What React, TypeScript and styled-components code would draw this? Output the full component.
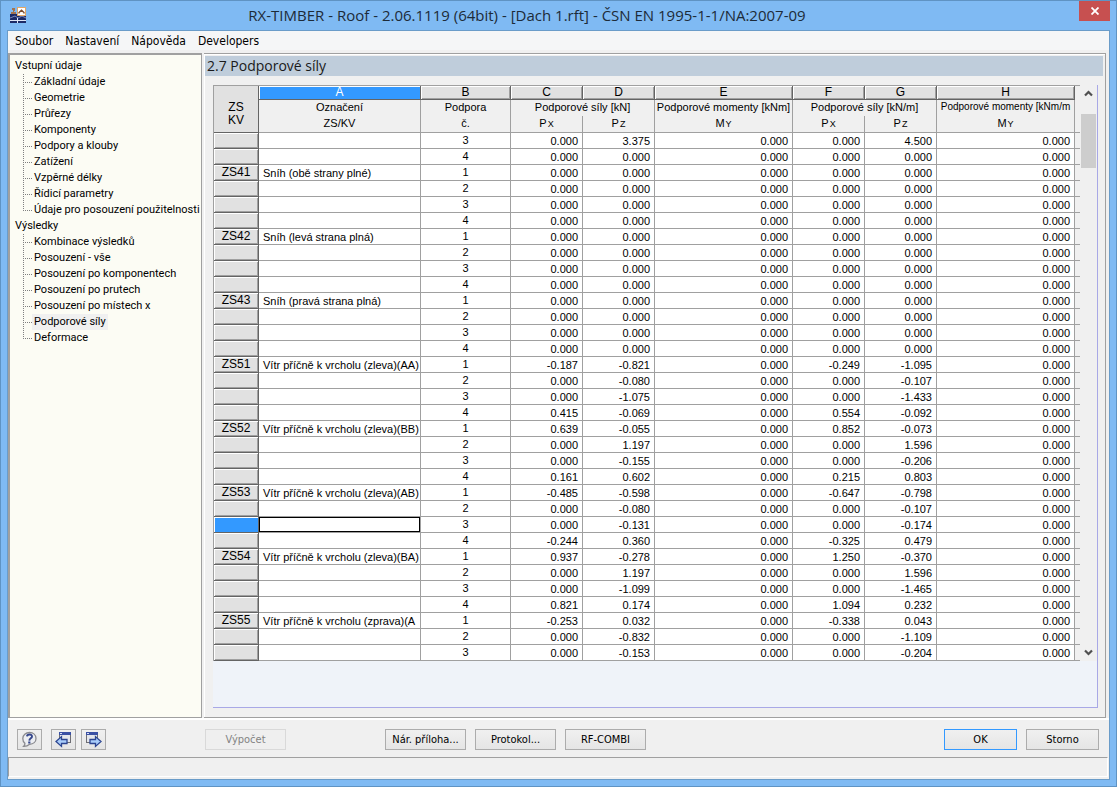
import React from "react";
import styled, { createGlobalStyle, css } from "styled-components";

const UI_FONT = '"DejaVu Sans Condensed", "Noto Sans", sans-serif';
const TITLE_FONT = '"Open Sans", "Noto Sans", sans-serif';
const COMPACT_FONT = 'Roboto, "Noto Sans", sans-serif';
const GRID_FONT = '"Liberation Sans", Arial, sans-serif';

const GlobalStyle = createGlobalStyle`
  *, *::before, *::after { box-sizing: border-box; }
  body { margin: 0; background: #7fbaf3; color: #000; font: 11px/16px ${UI_FONT}; }
  button { font: inherit; color: inherit; margin: 0; }
`;

const Window = styled.div`
  min-height: 100vh;
  display: flex;
  flex-direction: column;
  padding: 0 6px 6px;
  border: 1px solid #5f93c3;
  background: #7fbaf3;
`;

const TitleBar = styled.header`
  display: flex;
  align-items: flex-start;
  height: 29px;
  padding-left: 2px;
`;

const AppIcon = styled.svg`
  display: block;
  width: 17px;
  height: 16px;
  margin-top: 6px;
`;

const WindowTitle = styled.h1`
  flex: 1;
  margin: 0 51px 0 0;
  font: 400 15px/28px ${TITLE_FONT};
  color: #1d2b38;
  text-align: center;
  white-space: nowrap;
`;

const CloseButton = styled.button`
  display: flex;
  align-items: center;
  justify-content: center;
  width: 31px;
  height: 20px;
  padding: 0;
  border: 0;
  background: #c75050;
`;

const Client = styled.div`
  flex: 1;
  display: flex;
  flex-direction: column;
  border: 1px solid #6a9cc9;
  background: #f0f0f0;
`;

const MenuBar = styled.nav`
  display: flex;
  gap: 12px;
  height: 19px;
  padding: 0 7px;
  font-size: 12px;
  background: #f5f6f7;
`;

const MenuItem = styled.button`
  padding: 0;
  border: 0;
  background: none;
  line-height: 20px;
`;

const Workspace = styled.div`
  flex: 1;
  display: flex;
  gap: 2px;
  padding: 3px 3px 0 0;
  border-bottom: 2px solid #fff;
`;

const TreePanel = styled.nav`
  flex: none;
  width: 194px;
  padding: 3px 0 0 5px;
  border: 1px solid #a0a0a0;
  border-left-width: 2px;
  border-top-width: 2px;
  background: #fcfcf4;
  font-family: ${COMPACT_FONT};
`;

const TreeRoot = styled.ul`
  margin: 0;
  padding: 0;
  list-style: none;
`;

const TreeBranch = styled.ul`
  margin: 0;
  padding: 0 0 0 8px;
  list-style: none;
`;

const TreeLeaf = styled.li`
  display: flex;
  height: 16px;
  white-space: nowrap;
`;

const Twig = styled.span<{ $last: boolean }>`
  flex: none;
  width: 9px;
  height: 16px;
  background-image: repeating-linear-gradient(to bottom, #808080 0 1px, transparent 1px 2px),
    repeating-linear-gradient(to right, #808080 0 1px, transparent 1px 2px);
  background-repeat: no-repeat;
  background-position: 0 0, 0 8px;
  background-size: 1px ${(p) => (p.$last ? "8px" : "16px")}, 9px 1px;
`;

const TreeLink = styled.a<{ $selected?: boolean }>`
  padding: 0 2px;
  color: #000;
  text-decoration: none;
  background: ${(p) => (p.$selected ? "#f0f0f0" : "transparent")};
`;

const TreeGroupLink = styled.a`
  color: #000;
  text-decoration: none;
`;

const MainPanel = styled.main`
  flex: 1;
  min-width: 0;
  display: flex;
  flex-direction: column;
  padding: 2px 2px 9px 0;
  border: solid #a0a0a0;
  border-width: 1px 1px 1px 0;
  box-shadow: inset 1px 1px #fff;
`;

const PanelTitle = styled.h2`
  margin: 0 0 9px 1px;
  padding: 0 2px;
  font: 400 14px/20px ${TITLE_FONT};
  color: #1a1a1a;
  background: #bfcddb;
`;

const GridFrame = styled.div`
  flex: 1;
  margin: 0 5px 0 9px;
  border: solid #a8a8e6;
  border-width: 0 1px 1px 0;
  background: #eff3f9;
`;

const GridView = styled.div`
  display: grid;
  grid-template-columns: minmax(0, 1fr) 17px;
`;

const Table = styled.table`
  width: 100%;
  table-layout: fixed;
  border-collapse: separate;
  border-spacing: 0;
  border: solid #a0a0a0;
  border-width: 1px 0 0 1px;
  background: #fff;
  font: 11px/15px ${GRID_FONT};
`;

const Col = styled.col<{ $width?: number }>`
  width: ${(p) => (p.$width ? `${p.$width}px` : "auto")};
`;

const HeadCell = styled.th<{ $join?: boolean; $open?: boolean; $dense?: boolean }>`
  height: 16px;
  padding: 0;
  overflow: hidden;
  font-size: ${(p) => (p.$dense ? "10px" : "11px")};
  font-weight: 400;
  line-height: 14px;
  text-align: center;
  vertical-align: top;
  white-space: nowrap;
  background: #f0f0f0;
  border-right: ${(p) => (p.$open ? "0" : "1px solid #a0a0a0")};
  ${(p) =>
    !p.$join &&
    css`
      height: 17px;
      border-bottom: 1px solid #a0a0a0;
    `}
`;

const LetterCell = styled(HeadCell)<{ $active?: boolean }>`
  height: 14px;
  line-height: 13px;
  font-size: 12px;
  color: ${(p) => (p.$active ? "#fff" : "#000")};
  background: ${(p) => (p.$active ? "#3399ff" : "#e1e1e1")};
  border-right: 1px solid #646464;
  border-bottom: 1px solid #646464;
  box-shadow: inset 1px 1px #fff, inset -1px -1px ${(p) => (p.$active ? "#3399ff" : "#a0a0a0")};
`;

const CornerCell = styled(HeadCell)`
  font-size: 12px;
  line-height: 13px;
  padding-top: 15px;
  background: #e1e1e1;
  border-right-color: #646464;
  border-bottom-color: #646464;
`;

const RowHead = styled.th<{ $active?: boolean }>`
  height: 16px;
  padding: 0;
  font-size: 12px;
  font-weight: 400;
  text-align: center;
  border: solid #646464;
  border-width: 0 1px 1px 0;
  background: ${(p) => (p.$active ? "#3399ff" : "#e1e1e1")};
  box-shadow: inset 1px 1px #fff, inset -1px -1px ${(p) => (p.$active ? "#3399ff" : "#a0a0a0")};
`;

const Cell = styled.td<{ $align?: "left" | "center" | "right"; $focused?: boolean }>`
  height: 16px;
  padding: ${(p) => (p.$align === "center" ? "1px" : "2px")} 4px 0;
  overflow: hidden;
  line-height: 13px;
  vertical-align: top;
  white-space: nowrap;
  text-align: ${(p) => p.$align ?? "right"};
  border: solid #a0a0a0;
  border-width: 0 1px 1px 0;
  ${(p) =>
    p.$focused &&
    css`
      box-shadow: inset 0 0 0 1px #000;
    `}
`;

const EdgeCell = styled.td`
  padding: 0;
  background: #f0f0f0;
  border-bottom: 1px solid #a0a0a0;
`;

const AxisIndex = styled.span`
  margin-left: 1px;
  font-size: 9px;
  line-height: 1;
`;

const ScrollTrack = styled.div`
  display: flex;
  flex-direction: column;
  align-items: center;
  background: #f0f0f0;
`;

const ScrollButton = styled.button`
  display: flex;
  align-items: center;
  justify-content: center;
  width: 15px;
  height: 17px;
  padding: 0;
  border: 0;
  background: none;
`;

const ScrollThumb = styled.div`
  width: 15px;
  height: 54px;
  margin: 12px 0 auto;
  background: #cdcdcd;
`;

const Footer = styled.footer`
  display: grid;
  grid-template-columns: 197px 180px 1fr auto;
  padding: 9px 10px 7px 0;
`;

const ButtonRow = styled.div`
  display: flex;
  gap: 9px;
`;

const ToolRow = styled.div`
  display: flex;
  gap: 5px;
  padding-left: 9px;
`;

const ToolButton = styled.button<{ $apart?: boolean }>`
  display: flex;
  align-items: center;
  justify-content: center;
  width: 25px;
  height: 21px;
  margin-right: ${(p) => (p.$apart ? "4px" : "0")};
  padding: 0;
  border: 1px solid #acacac;
  background: linear-gradient(#f0f0f0, #e5e5e5);
`;

const PushButton = styled.button<{ $narrow?: boolean; $primary?: boolean }>`
  width: ${(p) => (p.$narrow ? "73px" : "81px")};
  height: 21px;
  padding: 0;
  line-height: 20px;
  border: 1px solid ${(p) => (p.$primary ? "#3399ff" : "#acacac")};
  background: linear-gradient(#f0f0f0, #e5e5e5);

  &:disabled {
    color: #838383;
    border-color: #d9d9d9;
    background: #efefef;
  }
`;

const StatusBar = styled.div`
  height: 20px;
  margin: 0 1px 2px 0;
  border: 1px solid #a0a0a0;
  border-right-color: #fff;
  border-bottom-color: #fff;
`;

const tree = [
  {
    label: "Vstupní údaje",
    items: [
      "Základní údaje",
      "Geometrie",
      "Průřezy",
      "Komponenty",
      "Podpory a klouby",
      "Zatížení",
      "Vzpěrné délky",
      "Řídicí parametry",
      "Údaje pro posouzení použitelnosti",
    ],
  },
  {
    label: "Výsledky",
    items: [
      "Kombinace výsledků",
      "Posouzení - vše",
      "Posouzení po komponentech",
      "Posouzení po prutech",
      "Posouzení po místech x",
      "Podporové síly",
      "Deformace",
    ],
  },
];

type Support = [no: number, px: string, pz: string, qx: string, qz: string];

const Z = "0.000";
const unloaded: Support[] = [1, 2, 3, 4].map((n) => [n, Z, Z, Z, Z]);

const loadCases: { id: string; name: string; supports: Support[] }[] = [
  { id: "", name: "", supports: [[3, Z, "3.375", Z, "4.500"], [4, Z, Z, Z, Z]] },
  { id: "ZS41", name: "Sníh (obě strany plné)", supports: unloaded },
  { id: "ZS42", name: "Sníh (levá strana plná)", supports: unloaded },
  { id: "ZS43", name: "Sníh (pravá strana plná)", supports: unloaded },
  {
    id: "ZS51",
    name: "Vítr příčně k vrcholu (zleva)(AA)",
    supports: [
      [1, "-0.187", "-0.821", "-0.249", "-1.095"],
      [2, Z, "-0.080", Z, "-0.107"],
      [3, Z, "-1.075", Z, "-1.433"],
      [4, "0.415", "-0.069", "0.554", "-0.092"],
    ],
  },
  {
    id: "ZS52",
    name: "Vítr příčně k vrcholu (zleva)(BB)",
    supports: [
      [1, "0.639", "-0.055", "0.852", "-0.073"],
      [2, Z, "1.197", Z, "1.596"],
      [3, Z, "-0.155", Z, "-0.206"],
      [4, "0.161", "0.602", "0.215", "0.803"],
    ],
  },
  {
    id: "ZS53",
    name: "Vítr příčně k vrcholu (zleva)(AB)",
    supports: [
      [1, "-0.485", "-0.598", "-0.647", "-0.798"],
      [2, Z, "-0.080", Z, "-0.107"],
      [3, Z, "-0.131", Z, "-0.174"],
      [4, "-0.244", "0.360", "-0.325", "0.479"],
    ],
  },
  {
    id: "ZS54",
    name: "Vítr příčně k vrcholu (zleva)(BA)",
    supports: [
      [1, "0.937", "-0.278", "1.250", "-0.370"],
      [2, Z, "1.197", Z, "1.596"],
      [3, Z, "-1.099", Z, "-1.465"],
      [4, "0.821", "0.174", "1.094", "0.232"],
    ],
  },
  {
    id: "ZS55",
    name: "Vítr příčně k vrcholu (zprava)(A",
    supports: [
      [1, "-0.253", "0.032", "-0.338", "0.043"],
      [2, Z, "-0.832", Z, "-1.109"],
      [3, Z, "-0.153", Z, "-0.204"],
    ],
  },
];

const Axis = ({ symbol, index }: { symbol: string; index: string }) => (
  <>
    {symbol}
    <AxisIndex>{index}</AxisIndex>
  </>
);

const Chevron = ({ down }: { down?: boolean }) => (
  <svg width="9" height="7" viewBox="0 0 9 7" aria-hidden="true">
    <path d={down ? "M1 1.5L4.5 5L8 1.5" : "M1 5.5L4.5 2L8 5.5"} fill="none" stroke="#505050" strokeWidth="2.2" />
  </svg>
);

const HelpIcon = () => (
  <svg width="17" height="17" viewBox="0 0 17 17" aria-hidden="true">
    <path
      d="M8.5 1.5C12.3 1.5 15 4 15 7.4C15 10.8 12.3 13.2 8.6 13.3C7 14.7 5 15.5 2.6 15.4C3.7 14.4 4 13.5 3.9 12.3C2.5 11.2 1.8 9.6 1.8 7.4C1.8 4 4.8 1.5 8.5 1.5Z"
      fill="#eceef2"
      stroke="#8b8b8f"
      strokeWidth="1.3"
    />
    <path d="M6 5.4C6.2 3 11.2 2.8 11 5.6C10.9 7.4 8.4 7.3 8.3 9.6" fill="none" stroke="#35468c" strokeWidth="1.9" />
    <rect x="7.2" y="10.5" width="2.2" height="2" fill="#35468c" />
  </svg>
);

const PageIcon = ({ forward }: { forward?: boolean }) => (
  <svg width="17" height="17" viewBox="0 0 17 17" aria-hidden="true">
    <rect x={forward ? 1.5 : 4.5} y="1.5" width="11" height="10" fill="#e4e6ec" stroke="#6e6e74" />
    <rect x={forward ? 1 : 4} y="1" width="12" height="3" fill="#3a50a4" />
    <rect x={forward ? 2 : 5} y="2" width="2" height="1" fill="#d8def4" />
    <path
      d={
        forward
          ? "M5 8.5H10.5V5.6L16 10.5L10.5 15.4V12.5H5Z"
          : "M12 8.5H6.5V5.6L1 10.5L6.5 15.4V12.5H12Z"
      }
      fill="#a9cdfb"
      stroke="#2c4591"
      strokeWidth="1.3"
    />
  </svg>
);

const Logo = () => (
  <AppIcon viewBox="0 0 17 16" aria-hidden="true">
    <rect x="1" y="7" width="16" height="9" fill="#1c2a66" />
    <path d="M1 13.5H17" stroke="#dfe6f5" strokeWidth="1" />
    <path d="M1 11L6 9L9 11L13 9L17 11" stroke="#7c8cc0" fill="none" />
    <path d="M8.5 11V16" stroke="#dfe6f5" />
    <path d="M3 1H6V4H5V5H7V7H2V5H4V3H3Z" fill="#a4744f" />
    <rect x="8.5" y="0.5" width="8" height="8" fill="#fff" stroke="#e2a869" />
    <path d="M10 6.5V5.5L12.5 3.2L15 5.5V6.5" fill="none" stroke="#7b4a2b" strokeWidth="1.4" />
  </AppIcon>
);

const App: React.FC = () => (
  <>
    <GlobalStyle />
    <Window>
      <TitleBar>
        <Logo />
        <WindowTitle>RX-TIMBER - Roof - 2.06.1119 (64bit) - [Dach 1.rft] - ČSN EN 1995-1-1/NA:2007-09</WindowTitle>
        <CloseButton aria-label="Zavřít">
          <svg width="8" height="8" viewBox="0 0 8 8" aria-hidden="true">
            <path d="M0.5 0.5L7.5 7.5M7.5 0.5L0.5 7.5" stroke="#fff" strokeWidth="1.8" />
          </svg>
        </CloseButton>
      </TitleBar>
      <Client>
        <MenuBar>
          {["Soubor", "Nastavení", "Nápověda", "Developers"].map((m) => (
            <MenuItem key={m}>{m}</MenuItem>
          ))}
        </MenuBar>
        <Workspace>
          <TreePanel>
            <TreeRoot>
              {tree.map((group) => (
                <li key={group.label}>
                  <TreeGroupLink href="#">{group.label}</TreeGroupLink>
                  <TreeBranch>
                    {group.items.map((item, i) => (
                      <TreeLeaf key={item}>
                        <Twig $last={i === group.items.length - 1} />
                        <TreeLink href="#" $selected={item === "Podporové síly"}>
                          {item}
                        </TreeLink>
                      </TreeLeaf>
                    ))}
                  </TreeBranch>
                </li>
              ))}
            </TreeRoot>
          </TreePanel>
          <MainPanel>
            <PanelTitle>2.7 Podporové síly</PanelTitle>
            <GridFrame>
              <GridView>
                <Table>
                  <colgroup>
                    <Col $width={45} />
                    <Col />
                    <Col $width={90} />
                    <Col $width={72} />
                    <Col $width={72} />
                    <Col $width={138} />
                    <Col $width={72} />
                    <Col $width={72} />
                    <Col $width={138} />
                    <Col $width={5} />
                  </colgroup>
                  <thead>
                    <tr>
                      <CornerCell rowSpan={3}>
                        ZS
                        <br />
                        KV
                      </CornerCell>
                      {["A", "B", "C", "D", "E", "F", "G", "H"].map((letter) => (
                        <LetterCell key={letter} $join $active={letter === "A"}>
                          {letter}
                        </LetterCell>
                      ))}
                      <HeadCell rowSpan={3} $open />
                    </tr>
                    <tr>
                      <HeadCell $join>Označení</HeadCell>
                      <HeadCell $join>Podpora</HeadCell>
                      <HeadCell $join colSpan={2}>
                        Podporové síly [kN]
                      </HeadCell>
                      <HeadCell $join>Podporové momenty [kNm]</HeadCell>
                      <HeadCell $join colSpan={2}>
                        Podporové síly [kN/m]
                      </HeadCell>
                      <HeadCell $join $dense>
                        Podporové momenty [kNm/m
                      </HeadCell>
                    </tr>
                    <tr>
                      <HeadCell>ZS/KV</HeadCell>
                      <HeadCell>č.</HeadCell>
                      <HeadCell><Axis symbol="P" index="X" /></HeadCell>
                      <HeadCell><Axis symbol="P" index="Z" /></HeadCell>
                      <HeadCell><Axis symbol="M" index="Y" /></HeadCell>
                      <HeadCell><Axis symbol="P" index="X" /></HeadCell>
                      <HeadCell><Axis symbol="P" index="Z" /></HeadCell>
                      <HeadCell><Axis symbol="M" index="Y" /></HeadCell>
                    </tr>
                  </thead>
                  <tbody>
                    {loadCases.map((lc) =>
                      lc.supports.map(([no, px, pz, qx, qz], i) => {
                        const current = lc.id === "ZS53" && no === 3;
                        return (
                          <tr key={`${lc.id}-${no}`}>
                            <RowHead $active={current}>{i === 0 ? lc.id : ""}</RowHead>
                            <Cell $align="left" $focused={current}>
                              {i === 0 ? lc.name : ""}
                            </Cell>
                            <Cell $align="center">{no}</Cell>
                            <Cell>{px}</Cell>
                            <Cell>{pz}</Cell>
                            <Cell>{Z}</Cell>
                            <Cell>{qx}</Cell>
                            <Cell>{qz}</Cell>
                            <Cell>{Z}</Cell>
                            <EdgeCell />
                          </tr>
                        );
                      })
                    )}
                  </tbody>
                </Table>
                <ScrollTrack>
                  <ScrollButton aria-label="Nahoru">
                    <Chevron />
                  </ScrollButton>
                  <ScrollThumb />
                  <ScrollButton aria-label="Dolů">
                    <Chevron down />
                  </ScrollButton>
                </ScrollTrack>
              </GridView>
            </GridFrame>
          </MainPanel>
        </Workspace>
        <Footer>
          <ToolRow>
            <ToolButton $apart aria-label="Nápověda">
              <HelpIcon />
            </ToolButton>
            <ToolButton aria-label="Předchozí">
              <PageIcon />
            </ToolButton>
            <ToolButton aria-label="Další">
              <PageIcon forward />
            </ToolButton>
          </ToolRow>
          <ButtonRow>
            <PushButton disabled>Výpočet</PushButton>
          </ButtonRow>
          <ButtonRow>
            <PushButton>Nár. příloha...</PushButton>
            <PushButton>Protokol...</PushButton>
            <PushButton>RF-COMBI</PushButton>
          </ButtonRow>
          <ButtonRow>
            <PushButton $narrow $primary>
              OK
            </PushButton>
            <PushButton $narrow>Storno</PushButton>
          </ButtonRow>
        </Footer>
        <StatusBar />
      </Client>
    </Window>
  </>
);

export default App;
